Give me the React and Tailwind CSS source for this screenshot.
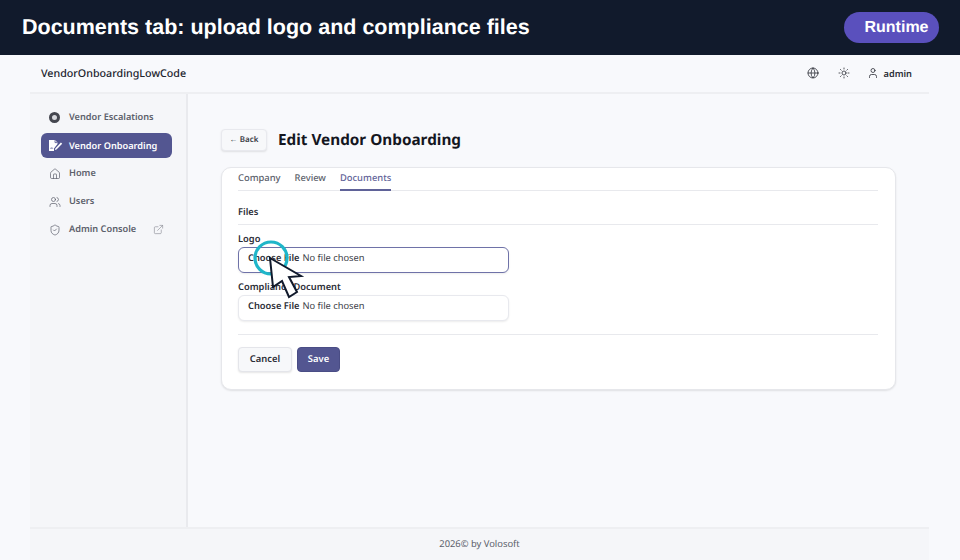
import React from "react";
import { Globe, Sun, User, House, Users, ShieldCheck, ExternalLink } from "lucide-react";

function NavItem({ icon, label, active, trailing }) {
  return (
    <div className={`flex h-[25px] items-center rounded-md pl-[8px] text-[9.2px] font-semibold ${active ? "bg-[#535691] text-white" : "text-[#5c5f6b]"}`}>
      <span className="flex w-[20px] shrink-0 items-center">{icon}</span>
      <span className={active ? "" : "pb-[1px]"}>{label}</span>
      {trailing && <span className="ml-auto mr-[8px] flex">{trailing}</span>}
    </div>
  );
}

function FileField({ label, focused }) {
  return (
    <div>
      <div className="text-[9.3px] leading-[14px] font-semibold text-[#2b2d36]">{label}</div>
      <div className={`mt-[1px] flex h-[26px] w-[271px] items-center rounded-md border bg-white pb-[3px] pl-[9px] text-[9.3px] text-[#3a3c46] shadow-[0_1px_2px_rgba(0,0,0,0.08)] ${focused ? "border-[#6f72a8]" : "border-[#e8e9ee]"}`}>
        <span className="font-semibold text-[#2b2d36]">Choose File</span>
        <span className="ml-[3px]">No file chosen</span>
      </div>
    </div>
  );
}

export default function App() {
  return (
    <div className="relative flex h-[560px] w-[960px] flex-col overflow-hidden bg-[#f8f9fc] font-['Noto_Sans',sans-serif] [text-rendering:geometricPrecision]">
      <header className="flex h-[55px] shrink-0 items-center justify-between bg-[#111a2c] pl-[22px] pr-[21px]">
        <h1 className="font-['Liberation_Sans',sans-serif] text-[21.5px] font-bold text-white">Documents tab: upload logo and compliance files</h1>
        <div className="flex h-[31px] w-[95px] items-center justify-center rounded-full bg-[#5a50bd] pl-[10px] font-['Liberation_Sans',sans-serif] text-[16px] font-bold text-white">Runtime</div>
      </header>

      <div className="mx-[30px] flex min-h-0 w-[899px] flex-1 flex-col">
        <div className="flex h-[39px] shrink-0 items-center justify-between border-b-2 border-[#eeeff2] pl-[11px] pr-[17px]">
          <span className="pt-[1px] text-[10.7px] font-medium text-[#20222c]">VendorOnboardingLowCode</span>
          <div className="flex items-center text-[#2b2d36]">
            <Globe size={12} strokeWidth={1.6} />
            <Sun size={12} strokeWidth={1.6} className="ml-[19px]" />
            <User size={12} strokeWidth={1.6} className="ml-[17px]" />
            <span className="ml-[5px] text-[9.2px] font-semibold">admin</span>
          </div>
        </div>

        <div className="flex min-h-0 flex-1">
          <aside className="flex w-[158px] shrink-0 flex-col gap-[3px] border-r-2 border-[#e9eaee] bg-[#f5f6f9] pl-[11px] pr-[14px] pt-[11px]">
            <NavItem label="Vendor Escalations" icon={<span className="-mt-[1px] block h-[11px] w-[11px] rounded-full border-[3.5px] border-[#44464f] bg-[#d8d9de]" />} />
            <NavItem active label="Vendor Onboarding" icon={
              <svg width="15" height="13" viewBox="0 0 15 13" className="-ml-[1px]">
                <path d="M1 1h6l2.5 2.5V5L6 9.5V12H1Z" fill="#fff" />
                <path d="M7 1.2V3.6h2.4" fill="none" stroke="#535691" strokeWidth="0.8" />
                <path d="M7.3 9.4l5.6-5.8 1.3 1.2-5.7 5.8-1.6.3Z" fill="#fff" />
                <path d="M2.4 9.6c.8-1.4 1.3-1 1.3 0 .6-.9 1-.7 1.2 0" fill="none" stroke="#535691" strokeWidth="0.7" />
              </svg>
            } />
            <NavItem label="Home" icon={<House size={12} strokeWidth={1.4} />} />
            <NavItem label="Users" icon={<Users size={12} strokeWidth={1.4} />} />
            <NavItem label="Admin Console" icon={<ShieldCheck size={12} strokeWidth={1.4} />} trailing={<ExternalLink size={11} strokeWidth={1.4} className="text-[#8b8d96]" />} />
          </aside>

          <main className="min-w-0 flex-1 pl-[33px] pr-[33px] pt-[34px]">
            <div className="flex items-center">
              <div className="flex h-[22px] w-[46px] items-center justify-center rounded-[4px] border border-[#e8e9ee] bg-[#f7f8fa] text-[8px] font-semibold text-[#3a3c46] shadow-[0_1px_2px_rgba(0,0,0,0.1)]">← Back</div>
              <h2 className="ml-[11px] pt-[1px] text-[15.3px] font-bold text-[#14161f]">Edit Vendor Onboarding</h2>
            </div>

            <section className="mt-[15px] h-[223px] rounded-[10px] border border-[#e6e7eb] bg-white pl-[16px] pr-[17px] shadow-[0_1px_2px_rgba(0,0,0,0.1)]">
              <div className="flex h-[23px] gap-[14px] border-b border-[#e8e9ed] text-[9.4px] font-medium text-[#5c5f6b]">
                <span className="pt-[3px]">Company</span>
                <span className="pt-[3px]">Review</span>
                <span className="h-[23px] border-b-2 border-[#5f6298] pt-[3px] text-[#5f6298]">Documents</span>
              </div>
              <div className="flex h-[34px] items-center border-b border-[#e8e9ed] pt-[10px] text-[9.3px] font-semibold text-[#2b2d36]">Files</div>
              <div className="mt-[7px] flex flex-col gap-[7px]">
                <FileField label="Logo" focused />
                <FileField label="Compliance Document" />
              </div>
              <div className="mt-[13px] flex gap-[5px] border-t border-[#e8e9ed] pt-[12px]">
                <div className="flex h-[25px] w-[54px] items-center justify-center rounded-[4px] border border-[#e4e5ea] bg-[#f7f8fa] text-[9.4px] font-semibold text-[#2b2d36] shadow-[0_1px_2px_rgba(0,0,0,0.1)]">Cancel</div>
                <div className="flex h-[25px] w-[43px] items-center justify-center rounded-[4px] border border-[#4a4d85] bg-[#535691] text-[9.4px] font-semibold text-white">Save</div>
              </div>
            </section>
          </main>
        </div>

        <footer className="flex h-[33px] shrink-0 items-center justify-center border-t-2 border-[#eeeff2] bg-[#f5f6f9] text-[9.4px] text-[#5c5f6b]">2026© by Volosoft</footer>
      </div>

      <svg className="absolute left-[250px] top-[238px]" width="56" height="64" viewBox="0 0 56 64" fill="none">
        <circle cx="21" cy="20" r="16" stroke="#1fb6c9" strokeWidth="3.2" />
        <path d="M20 20 L51 38 L39 39 L47 54 L39 59 L32 43 L23 49 Z" fill="#fff" stroke="#111a2c" strokeWidth="2" strokeLinejoin="miter" />
      </svg>
    </div>
  );
}
